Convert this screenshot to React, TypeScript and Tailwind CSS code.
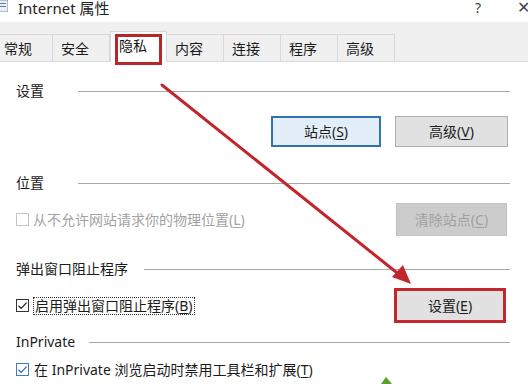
import React from 'react'

const FONT = { fontFamily: '"Noto Sans", "Noto Sans CJK SC", sans-serif' }

const tabs = ['常规', '安全', '隐私', '内容', '连接', '程序', '高级']

function Mn({ children }: { children: React.ReactNode }) {
  return (
    <span>
      (<span className="underline underline-offset-2">{children}</span>)
    </span>
  )
}

function Heading({ label, gap }: { label: string; gap: string }) {
  return (
    <div className="flex h-[20px] items-center pr-[18px]">
      <span className={`shrink-0 text-[14px] leading-[20px] text-[#1b1b1b] ${gap}`}>{label}</span>
      <div className="h-px flex-1 bg-[#a9a9a9]" />
    </div>
  )
}

function Check({ checked, disabled, blue }: { checked?: boolean; disabled?: boolean; blue?: boolean }) {
  const border = disabled ? 'border-[#c4c4c4]' : blue ? 'border-[#3d7ebf]' : 'border-[#333]'
  return (
    <span className={`relative inline-block h-[13px] w-[13px] shrink-0 border bg-white ${border}`}>
      {checked && (
        <svg viewBox="0 0 13 13" className="absolute -left-px -top-px h-[13px] w-[13px]">
          <path d="M2.5 6.8 L5.2 9.4 L10.6 3.6" fill="none" stroke={blue ? '#2f6fb0' : '#222'} strokeWidth="1.3" />
        </svg>
      )}
    </span>
  )
}

export default function App() {
  return (
    <div className="relative h-[384px] w-[528px] overflow-hidden bg-white" style={FONT}>
      {/* title bar */}
      <div className="flex h-[22px] items-start">
        <svg viewBox="0 0 10 12" className="-ml-[2px] h-[12px] w-[10px]">
          <rect x="0" y="0" width="10" height="12" fill="#e8eef6" stroke="#7a8fa8" />
          <rect x="2" y="3" width="6" height="1" fill="#5d7ea6" />
          <rect x="2" y="6" width="6" height="1" fill="#5d7ea6" />
        </svg>
        <span className="-mt-[1px] ml-[10px] text-[15px] leading-[18px] text-[#222]">Internet 属性</span>
        <span className="-mt-[1px] ml-auto text-[14px] leading-[18px] text-[#444]">?</span>
        <span className="-mt-[2px] ml-[36px] mr-[-2px] text-[16px] leading-[18px] text-[#444]">✕</span>
      </div>

      {/* tab strip */}
      <div className="flex h-[40px] items-end border-b border-[#d9d9d9] bg-[#f0f0f0]">
        <div className="-ml-[4px] flex items-end">
          {tabs.map((t) =>
            t === '隐私' ? (
              <div
                key={t}
                className="relative -mb-px h-[31px] w-[57px] border-x border-t border-[#d9d9d9] bg-white pl-[8px] pt-[5px] text-[14px] leading-[18px] text-[#111]"
              >
                {t}
                <div className="absolute left-[4px] top-[2px] h-[31px] w-[47px] border-[3px] border-[#b8252b]" />
              </div>
            ) : (
              <div
                key={t}
                className="-ml-px h-[27px] w-[58px] border-x border-t border-[#d9d9d9] bg-[#f0f0f0] pl-[8px] pt-[5px] text-[14px] leading-[18px] text-[#1b1b1b]"
              >
                {t}
              </div>
            )
          )}
        </div>
      </div>

      {/* content */}
      <div className="flex flex-col pl-[16px] text-[14px] text-[#1b1b1b]">
        <div className="mt-[19px]">
          <Heading label="设置" gap="mr-[34px]" />
        </div>
        <div className="mt-[15px] flex justify-end gap-[14px] pr-[20px]">
          <button className="h-[31px] w-[110px] border-2 border-[#2e73b4] bg-[#e3eef9] text-[14px] leading-[18px] text-[#1b1b1b]">
            站点<Mn>S</Mn>
          </button>
          <button className="h-[31px] w-[113px] border border-[#adadad] bg-[#e1e1e1] text-[14px] leading-[18px] text-[#1b1b1b]">
            高级<Mn>V</Mn>
          </button>
        </div>

        <div className="mt-[26px]">
          <Heading label="位置" gap="mr-[34px]" />
        </div>
        <div className="mt-[10px] flex h-[33px] items-center pr-[21px]">
          <Check disabled />
          <span className="ml-[4px] text-[#a3a3a3]">
            从不允许网站请求你的物理位置<Mn>L</Mn>
          </span>
          <button className="ml-auto h-[33px] w-[111px] border border-[#c2c2c2] bg-[#cccccc] text-[14px] leading-[18px] text-[#a0a0a0]">
            清除站点<Mn>C</Mn>
          </button>
        </div>

        <div className="mt-[23px]">
          <Heading label="弹出窗口阻止程序" gap="mr-[16px]" />
        </div>
        <div className="mt-[9px] flex h-[35px] items-center pr-[22px]">
          <Check checked />
          <span className="ml-[4px] border border-dotted border-[#333] px-px leading-[16px]">
            启用弹出窗口阻止程序<Mn>B</Mn>
          </span>
          <button className="ml-auto h-[35px] w-[112px] border-[3px] border-[#c4262e] bg-[#e1e1e1] text-[14px] leading-[18px] text-[#1b1b1b]">
            设置<Mn>E</Mn>
          </button>
        </div>

        <div className="mt-[9px]">
          <Heading label="InPrivate" gap="mr-[14px]" />
        </div>
        <div className="mt-[7px] flex h-[20px] items-center">
          <Check checked blue />
          <span className="ml-[5px]">
            在 InPrivate 浏览启动时禁用工具栏和扩展<Mn>T</Mn>
          </span>
        </div>
      </div>

      {/* annotation overlay */}
      <svg className="pointer-events-none absolute left-0 top-0" width="528" height="384" viewBox="0 0 528 384">
        <line x1="162" y1="85" x2="401" y2="276" stroke="#c0262c" strokeWidth="3" strokeLinecap="round" />
        <polygon points="411,284 392,277 403,265" fill="#c0262c" />
        <polygon points="381,384 386,377 392,384" fill="#5aa02c" />
      </svg>
    </div>
  )
}
